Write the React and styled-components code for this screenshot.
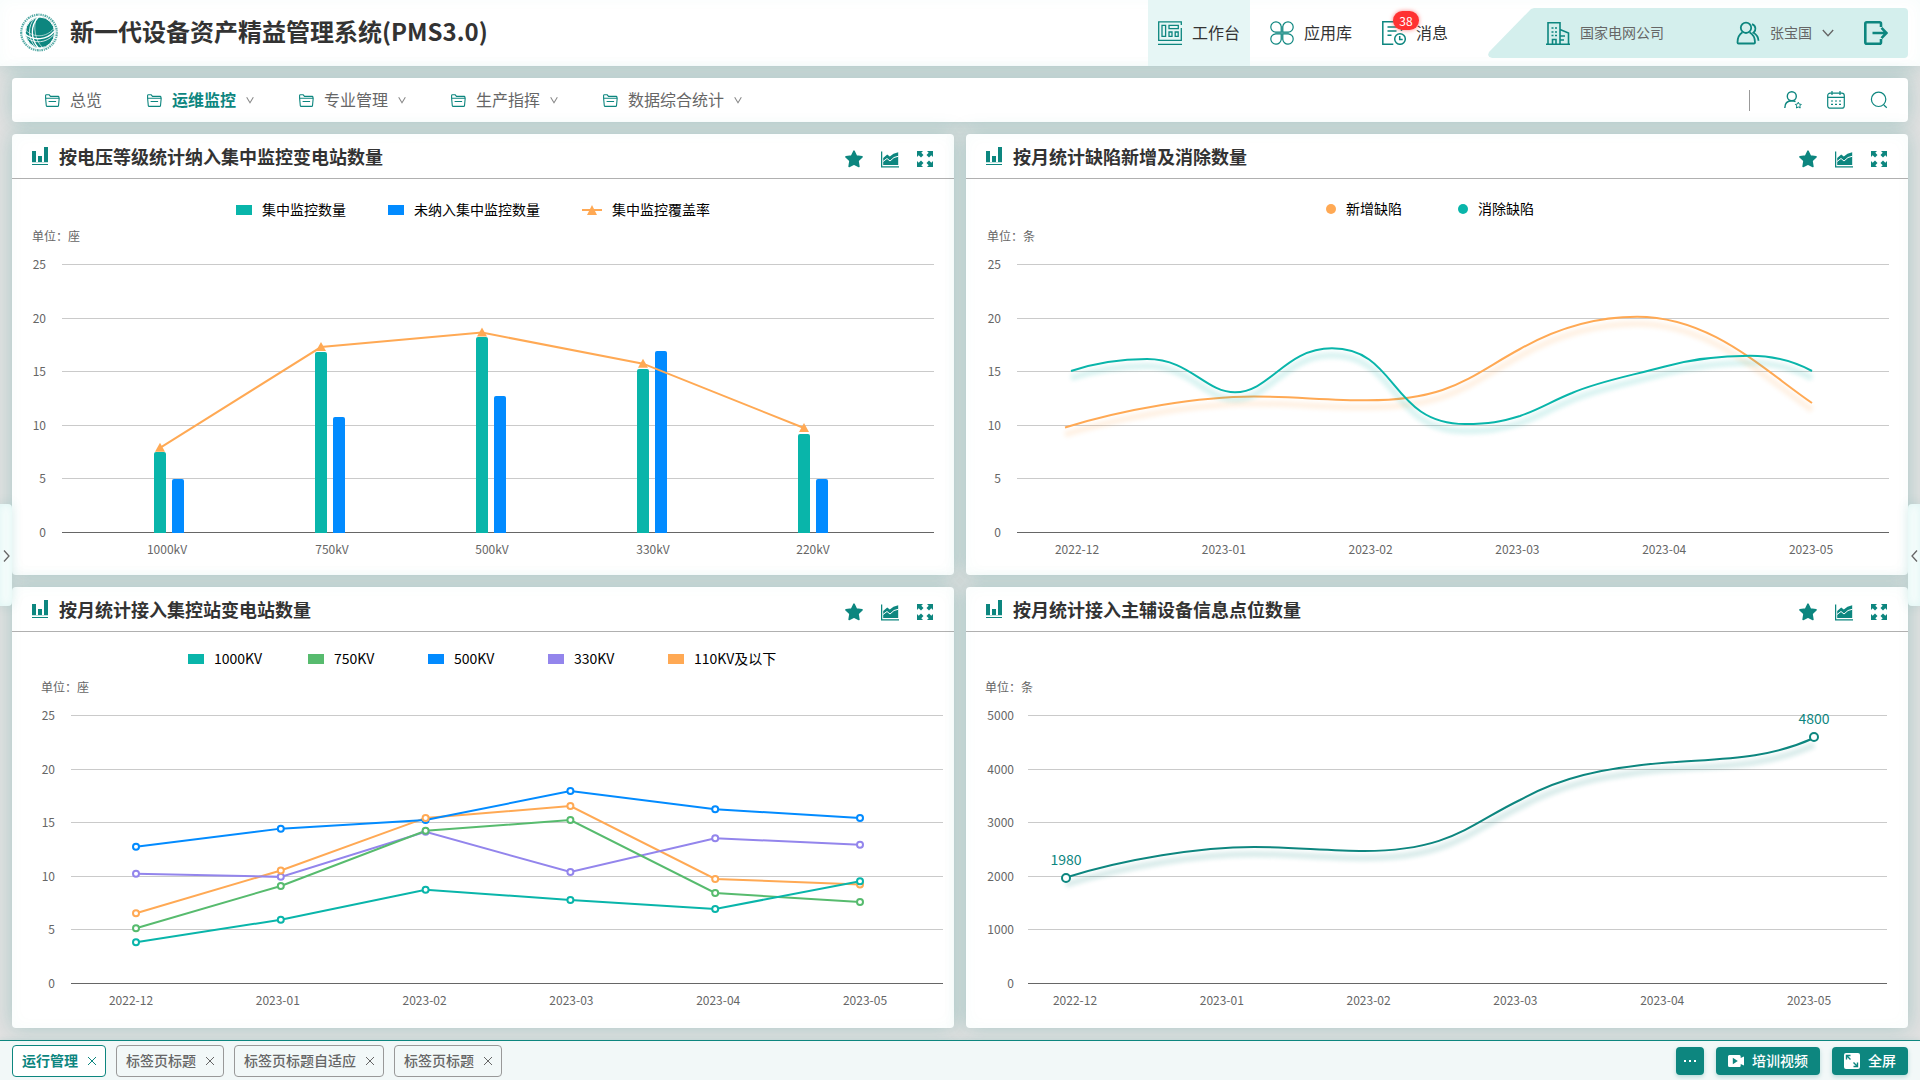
import React from "react";
import styled, { createGlobalStyle, css } from "styled-components";

const C = {
  brand: "#0d867f",
  teal: "#09b5aa",
  blue: "#028bff",
  orange: "#ffa954",
  green: "#57bb6e",
  purple: "#9385ec",
  text: "#333333",
  sub: "#666666",
  line: "#cacaca",
};

const FONT = '"Noto Sans CJK SC", "Noto Sans", sans-serif';
const glow = "0 0 20px rgba(13, 134, 127, 0.27)";
const innerGlow = "inset 0 0 16px rgba(9, 181, 170, 0.03)";

const Global = createGlobalStyle`
  *, *::before, *::after { box-sizing: border-box; }
  body { margin: 0; font-family: ${FONT}; color: ${C.text}; background: #e1e1e1; }
  button { font: inherit; color: inherit; background: none; border: 0; padding: 0; margin: 0; cursor: pointer; }
  a { color: inherit; text-decoration: none; }
  h1, h2, ul { margin: 0; padding: 0; }
  ul { list-style: none; }
  svg { display: block; flex: none; }
`;

const Page = styled.div`
  position: relative;
  display: flex;
  flex-direction: column;
  min-height: 100vh;
  overflow: hidden;
`;

/* Lifts the glyphs to the optical middle of the icon beside them. */
const Label = styled.span`
  padding-bottom: 2px;
`;

/* ---------- header ---------- */
const Header = styled.header`
  display: flex;
  align-items: stretch;
  height: 66px;
  padding: 0 12px 0 19px;
  background: #fff;
  box-shadow: ${innerGlow}, ${glow};
`;
const Brand = styled.div`
  display: flex;
  align-items: center;
  gap: 11px;
  flex: 1;
`;
const SiteTitle = styled.h1`
  font-size: 24px;
  font-weight: 700;
  line-height: 36px;
  padding-bottom: 4px;
`;
const TopMenu = styled.nav`
  display: flex;
  gap: 10px;
  margin-right: 30px;
`;
const TopLink = styled.a`
  position: relative;
  display: flex;
  align-items: center;
  gap: 10px;
  padding: 0 10px;
  font-size: 16px;
  background: ${(p) => (p.$active ? "#e6f6f5" : "transparent")};
`;
const Badge = styled.span`
  position: absolute;
  top: 11px;
  left: 21px;
  width: 26px;
  height: 19px;
  border-radius: 10px;
  background: #ff3232;
  color: #fff;
  font-size: 12px;
  line-height: 19px;
  text-align: center;
  box-shadow: 0 0 4px rgba(255, 50, 50, 0.6);
`;
const Account = styled.div`
  display: flex;
  align-items: center;
  justify-content: space-between;
  width: 420px;
  height: 50px;
  margin-top: 8px;
  padding: 0 20px 0 58px;
  border-radius: 4px;
  background: #d4efed;
  color: ${C.sub};
  font-size: 14px;
  clip-path: polygon(43px 1px, 46px 0, 100% 0, 100% 100%, 4px 100%, 1px 49px, 0 47px, 1px 44px);
`;
const Inline = styled.div`
  display: flex;
  align-items: center;
  gap: ${(p) => p.$gap || 10}px;
`;
const TextButton = styled.button`
  display: flex;
  align-items: center;
  gap: 10px;
`;

/* ---------- sub navigation ---------- */
const SubNav = styled.nav`
  display: flex;
  align-items: center;
  justify-content: space-between;
  height: 44px;
  margin: 12px 12px 0;
  padding: 0 20px 0 33px;
  border-radius: 4px;
  background: #fff;
  box-shadow: ${glow};
`;
const SubLink = styled.a`
  display: flex;
  align-items: center;
  gap: 10px;
  font-size: 16px;
  line-height: 24px;
  color: ${(p) => (p.$active ? C.brand : C.sub)};
  font-weight: ${(p) => (p.$active ? 700 : 400)};
`;
const Divider = styled.span`
  width: 1px;
  height: 21px;
  margin-right: 9px;
  background: #999;
`;
const IconButton = styled.button`
  display: flex;
  align-items: center;
  justify-content: center;
`;

/* ---------- cards ---------- */
const Grid = styled.main`
  flex: 1;
  display: grid;
  grid-template-columns: 1fr 1fr;
  grid-auto-rows: 1fr;
  gap: 12px;
  padding: 12px;
`;
const Card = styled.section`
  min-width: 0;
  border-radius: 4px;
  background: #fff;
  box-shadow: ${innerGlow}, ${glow};
`;
const CardHead = styled.div`
  display: flex;
  align-items: center;
  gap: 11px;
  height: 45px;
  padding: 0 21px 0 20px;
  border-bottom: 1px solid #b0b0b0;
`;
const CardTitle = styled.h2`
  flex: 1;
  font-size: 18px;
  font-weight: 700;
  line-height: 26px;
`;
const Tools = styled.div`
  display: flex;
  align-items: center;
  gap: 18px;
  padding-top: 5px;
`;
const Legend = styled.ul`
  display: flex;
  justify-content: center;
  gap: ${(p) => p.$gap}px;
  height: 44px;
  padding: ${(p) => p.$pad};
  color: #000;
  font-size: 14px;
  line-height: 22px;
`;
const LegendItem = styled.li`
  display: flex;
  align-items: center;
  gap: 10px;
  height: 24px;
  min-width: ${(p) => p.$min || 0}px;
`;
const Swatch = styled.span`
  width: ${(p) => (p.$round ? 10 : 16)}px;
  height: 10px;
  border-radius: ${(p) => (p.$round ? 5 : 0)}px;
  background: ${(p) => p.$color};
`;
const ChartSvg = styled.svg`
  width: 100%;
  height: auto;
  overflow: visible;
  text { font-family: ${FONT}; font-size: 12px; fill: ${C.sub}; }
  .value { font-size: 14px; fill: ${C.brand}; }
`;

/* ---------- footer ---------- */
const Footer = styled.footer`
  display: flex;
  align-items: center;
  justify-content: space-between;
  height: 40px;
  padding: 0 12px;
  border-top: 1px solid ${C.brand};
  background: #f2f8f8;
  box-shadow: 0 0 6px rgba(13, 134, 127, 0.15);
  font-size: 14px;
  font-weight: 500;
`;
const Tab = styled.div`
  display: flex;
  align-items: center;
  gap: 10px;
  height: 32px;
  padding: 0 9px;
  border: 1px solid ${(p) => (p.$active ? C.brand : "#999")};
  border-radius: 4px;
  color: ${(p) => (p.$active ? C.brand : C.sub)};
  ${(p) => p.$active && css`background: #fff; font-weight: 700;`}
`;
const TabName = styled.button`
  && { padding-bottom: 2px; }
`;
const Action = styled.button`
  display: flex;
  align-items: center;
  justify-content: center;
  gap: 8px;
  height: 28px;
  && { padding: 0 ${(p) => (p.$small ? 8 : 12)}px; }
  border-radius: 4px;
  background: ${C.brand};
  color: #fff;
  box-shadow: 0 2px 4px rgba(13, 134, 127, 0.25);
`;
const Handle = styled.button`
  position: absolute;
  top: 504px;
  ${(p) => p.$side}: 0;
  display: flex;
  align-items: center;
  justify-content: center;
  width: 12px;
  height: 102px;
  padding-top: 2px;
  border-radius: ${(p) => (p.$side === "left" ? "0 4px 4px 0" : "4px 0 0 4px")};
  background: #f6fdfc;
  box-shadow: inset 0 0 8px rgba(9, 181, 170, 0.1), 0 0 12px rgba(13, 134, 127, 0.15);
`;

/* ---------- icons ---------- */
const Stroke = ({ size, w = 1.5, color = C.brand, vb = 24, children }) => (
  <svg width={size} height={size} viewBox={`0 0 ${vb} ${vb}`} fill="none" stroke={color} strokeWidth={w} aria-hidden="true">
    {children}
  </svg>
);

const Logo = () => (
  <svg width="40" height="40" viewBox="0 0 40 40" aria-hidden="true">
    <circle cx="20" cy="19.5" r="17.8" fill="none" stroke={C.brand} strokeWidth="2.2" strokeDasharray="1.2 .8 1.8 .7 1 .9 1.5 .8" opacity=".7" />
    <ellipse cx="21" cy="19.5" rx="14.6" ry="15.4" fill={C.brand} stroke="#fff" strokeWidth="1" />
    <g fill="none" stroke="#fff">
      <path d="M19 4.500C12 12 11 25 19 34.500" strokeWidth="1.300" />
      <path d="M15.500 5.500C8.500 13 9 25 16 33.500" strokeWidth=".8" />
      <path d="M17.500 4.500C14 14 16 27 23 34" strokeWidth=".6" />
      <path d="M6.500 21.500C15 28 28 27 35 18.500" strokeWidth="1.500" />
      <path d="M7.500 24.500C16 31 27 30 34.500 22" strokeWidth=".8" />
      <path d="M7 17.500C15 25 27 24.500 34.500 16" strokeWidth=".6" />
    </g>
  </svg>
);
const DeskIcon = () => (
  <Stroke size={24} w={1.3}>
    <path d="M23.300 4V.8H.7v18.500h22.600V7M0 23.300h24" />
    <path d="M4 4.300h3.600v11H4zM11 4.300h9.300v3.400H11zM11 11h3v4.300h-3zM17.200 11h3v4.300h-3z" />
  </Stroke>
);
const AppsIcon = () => (
  <Stroke size={24} w={1.2}>
    <path d="M11.200 11.200H5.800A5.200 5.200 0 1 1 11.200 5.800zM12.800 11.200V5.800a5.200 5.200 0 1 1 5.400 5.400zM11.200 12.800v5.400a5.200 5.200 0 1 1-5.400-5.400zM12.800 12.800h5.400a5.200 5.200 0 1 1-5.400 5.400z" />
    <path d="M5 12h14M12 5v14" opacity=".5" />
  </Stroke>
);
const NoticeIcon = () => (
  <Stroke size={24} w={1.5}>
    <path d="M19.500 10V.8H.8v22.400h10.500M5.500 6h9M5.500 10h9M5.500 14.300h4" />
    <circle cx="18" cy="18" r="5.300" />
    <path d="M17.700 15v3.500h3" />
  </Stroke>
);
const BuildingIcon = () => (
  <Stroke size={24} w={1.6}>
    <path d="M0 23.200h24M2 23V1.800h12V23M14 8.500l8.500 3.500v11M14 15h5M14 19h4" />
    <path d="M6.500 23v-4.500h3.500V23" />
    <path d="M5.500 7h2M9 7h2M5.500 11h2M9 11h2M5.500 14.500h2M9 14.500h2" />
  </Stroke>
);
const UsersIcon = () => (
  <Stroke size={24} w={1.8}>
    <circle cx="10" cy="6.800" r="5.200" />
    <path d="M6.500 11.300C3 13.500 1.500 17 1.500 21.500q0 1 1 1h15.500q1 0 1-1c0-4.500-1.500-8-5.500-10.200" />
    <path d="M16 3.200c4 1.500 4.500 6 1.500 8.500 3.500 2 4.800 4.500 5 8" />
  </Stroke>
);
const LogoutIcon = () => (
  <Stroke size={24} w={2.6}>
    <path d="M17 6V2.800Q17 1.300 15.500 1.300H2.800Q1.300 1.300 1.300 2.800v18.400q0 1.500 1.500 1.500h12.700q1.500 0 1.500-1.500V18" />
    <path d="M8.500 12H22M17.500 6.800l5 5.200-5 5.200" />
  </Stroke>
);
const Chevron = ({ w = 8, color = "#888" }) => (
  <svg width={w} height={w} viewBox="0 0 12 12" fill="none" stroke={color} strokeWidth={w === 8 ? 1.6 : 1.2} aria-hidden="true">
    <path d="M1 2l5 8 5-8" />
  </svg>
);
const WideChevron = () => (
  <svg width="12" height="12" viewBox="0 0 12 12" fill="none" stroke="#666" strokeWidth="1.300" aria-hidden="true">
    <path d="M.8 3L6 8.800 11.200 3" />
  </svg>
);
const FolderIcon = () => (
  <Stroke size={15} vb={15} w={1.1}>
    <path d="M.6 5V2.600q0-.8.800-.8h2.800l1.300 1.600h7.700q.7 0 .7.800V5" />
    <path d="M.6 5.200h13.600l-.7 7.400q-.1.800-.9.800H2.200q-.8 0-.9-.8zM3.600 8.500h7.500" />
  </Stroke>
);
const UserStarIcon = () => (
  <Stroke size={18} vb={18} w={1.4}>
    <circle cx="7.800" cy="5.300" r="4.500" />
    <path d="M.8 17C.8 12.500 3.500 9.800 7.800 9.800c1.500 0 2.700.3 3.700.9" />
    <path d="M14.300 11.200l.9 1.900 2.100.3-1.500 1.500.4 2.100-1.900-1-1.900 1 .4-2.100-1.500-1.500 2.100-.3z" strokeWidth="1" />
  </Stroke>
);
const CalendarIcon = () => (
  <Stroke size={18} vb={18} w={1.2}>
    <rect x=".7" y="2.200" width="16.600" height="15" rx="2.500" />
    <path d="M.7 6.300h16.600M5 0v4M13 0v4" />
    <path d="M4 10h2M8 10h2M12 10h2M4 13.300h2M8 13.300h2M12 13.300h2" />
  </Stroke>
);
const SearchIcon = () => (
  <Stroke size={18} vb={18} w={1.2}>
    <circle cx="8.600" cy="8.300" r="7.200" />
    <path d="M13.800 14l3 2.800" />
  </Stroke>
);
const BarsIcon = () => (
  <svg width="16" height="18" viewBox="0 0 16 18" fill={C.brand} aria-hidden="true">
    <path d="M0 4h4v11H0zM6 9h4v6H6zM12 0h4v15h-4zM0 17h16v1H0z" />
    <path d="M0 15h16v1H0z" opacity=".25" />
  </svg>
);
const StarIcon = () => (
  <svg width="18" height="18" viewBox="0 0 18 18" fill={C.brand} stroke={C.brand} strokeWidth="1.600" strokeLinejoin="round" aria-hidden="true">
    <path d="M9 1.200l2.400 4.900 5.600.8-4 3.900.9 5.700L9 14l-4.900 2.500.9-5.700-4-3.900 5.600-.8z" />
  </svg>
);
const AreaIcon = () => (
  <svg width="18" height="18" viewBox="0 0 18 18" aria-hidden="true">
    <path d="M.6 1.500v15.300H18" fill="none" stroke={C.brand} strokeWidth="1.300" />
    <path d="M2.200 15V8l4-3.600 2.600 2L12.500 3.800l4.700-1.500V15z" fill={C.brand} />
    <path d="M2 11.500l4-3 3 2.500 4-3.500 4.500-1.300" fill="none" stroke="#fff" strokeWidth="1" />
  </svg>
);
const ExpandIcon = () => (
  <svg width="16" height="16" viewBox="0 0 16 16" fill={C.brand} aria-hidden="true">
    <path d="M0 0h6L4.300 1.700 6.500 4 4 6.500 1.700 4.300 0 6zM16 0v6l-1.700-1.700L12 6.500 9.500 4l2.200-2.300L10 0zM0 16v-6l1.700 1.700L4 9.500 6.500 12l-2.200 2.300L6 16zM16 16h-6l1.700-1.700L9.500 12 12 9.500l2.300 2.200L16 10z" />
  </svg>
);
const CloseIcon = () => (
  <svg width="8" height="8" viewBox="0 0 8 8" stroke="currentColor" strokeWidth="1" aria-hidden="true">
    <path d="M0 0l8 8M8 0L0 8" />
  </svg>
);
const VideoIcon = () => (
  <svg width="16" height="16" viewBox="0 0 16 16" aria-hidden="true">
    <path d="M1.500 2h10q1.200 0 1.200 1.500V5L16 3.500v9L12.700 11v1.500q0 1.500-1.200 1.500h-10Q0 14 0 12.500v-9Q0 2 1.500 2z" fill="#fff" />
    <path d="M4.800 4.800v6.400L9.800 8z" fill={C.brand} />
  </svg>
);
const FullIcon = () => (
  <svg width="16" height="16" viewBox="0 0 16 16" aria-hidden="true">
    <rect width="16" height="16" rx="2" fill="#fff" />
    <path d="M2.500 6.500V2.500h4M2.500 2.500l4 4M13.500 9.500v4h-4M13.500 13.500l-4-4" fill="none" stroke={C.brand} strokeWidth="1.400" />
  </svg>
);

/* ---------- charts ---------- */
const MONTHS = ["2022-12", "2023-01", "2023-02", "2023-03", "2023-04", "2023-05"];
const PLOT = 268;
const scaleY = (top, max) => (v) => top + PLOT - (v / max) * PLOT;
const spread = (start) => MONTHS.map((_, i) => start + i * 146.8);

function Chart({ title, unit, unitX, x0, x1, top, labelX, ticks, labels, labelXs, children }) {
  const max = ticks[0];
  const y = scaleY(top, max);
  return (
    <ChartSvg viewBox="0 0 942 352" role="img" aria-label={title}>
      <text x={unitX} y={top - 23}>{unit}</text>
      {ticks.map((t) => (
        <g key={t}>
          <rect x={x0} y={Math.round(y(t))} width={x1 - x0} height="1" fill={t === 0 ? C.sub : C.line} />
          <text x={labelX} y={Math.round(y(t)) + 5} textAnchor="end">{t}</text>
        </g>
      ))}
      {labels.map((l, i) => (
        <text key={l} x={labelXs[i]} y={top + PLOT + 22} textAnchor="middle">{l}</text>
      ))}
      {children}
    </ChartSvg>
  );
}

const FIVES = [25, 20, 15, 10, 5, 0];
const VOLTAGE = [
  { name: "1000kV", on: 7.46, off: 4.95, rate: 7.85 },
  { name: "750kV", on: 16.8, off: 10.75, rate: 17.25 },
  { name: "500kV", on: 18.2, off: 12.7, rate: 18.6 },
  { name: "330kV", on: 15.2, off: 16.9, rate: 15.7 },
  { name: "220kV", on: 9.15, off: 4.95, rate: 9.7 },
];

function VoltageChart() {
  const y = scaleY(41, 25);
  const bar = (x, v, fill) => {
    const t = Math.round(y(v));
    return <path d={`M${x} 310V${t + 2}q0-2 2-2h8q2 0 2 2V310z`} fill={fill} />;
  };
  return (
    <Chart title="按电压等级统计" unit="单位：座" unitX={20} x0={50} x1={922} top={41} labelX={34}
      ticks={FIVES} labels={VOLTAGE.map((d) => d.name)} labelXs={[155, 320, 480, 641, 801]}>
      {VOLTAGE.map((d, i) => (
        <g key={d.name}>
          {bar(142 + i * 161, d.on, C.teal)}
          {bar(160 + i * 161, d.off, C.blue)}
        </g>
      ))}
      <polyline points={VOLTAGE.map((d, i) => `${148 + i * 161},${y(d.rate)}`).join(" ")} fill="none" stroke={C.orange} strokeWidth="2" />
      {VOLTAGE.map((d, i) => (
        <path key={d.name} d={`M${148 + i * 161} ${y(d.rate) - 5}l5 9h-10z`} fill={C.orange} />
      ))}
    </Chart>
  );
}

function SmoothLine({ d, color, id }) {
  return (
    <>
      <filter id={id} x="-5%" y="-30%" width="110%" height="170%">
        <feGaussianBlur stdDeviation="2" />
      </filter>
      <path d={d} fill="none" stroke={color} strokeWidth="6" opacity=".16" transform="translate(0 7)" filter={`url(#${id})`} />
      <path d={d} fill="none" stroke={color} strokeWidth="2" />
    </>
  );
}

function DefectChart() {
  return (
    <Chart title="按月统计缺陷新增及消除数量" unit="单位：条" unitX={21} x0={51} x1={923} top={41} labelX={35}
      ticks={FIVES} labels={MONTHS} labelXs={spread(111)}>
      <SmoothLine id="added" color={C.orange}
        d="M99 204.500C159 186 234 173.500 288 173.500C324 173.500 364 177.300 401 177.300C484 177.300 504 153 554 126C584 109 624 93.700 671 93.700C744 93.700 794 144 846 180" />
      <SmoothLine id="cleared" color={C.teal}
        d="M105 148C129 140 156 136 181 136C224 136 239 169.300 269 169.300C304 169.300 319 125.300 366 125.300C432 125.300 424 201 499 201C524 201 534 199 554 193C574 186 586 178 606 170C634 158 664 153 698 143.700C724 136.500 754 132.700 784 132.700C811 132.700 831 140 846 148" />
    </Chart>
  );
}

const SERIES = {
  orange: [6.5, 10.5, 15.4, 16.5, 9.7, 9.2],
  purple: [10.2, 9.9, 14.1, 10.35, 13.5, 12.9],
  green: [5.1, 9.05, 14.2, 15.2, 8.4, 7.55],
  blue: [12.7, 14.4, 15.2, 17.9, 16.2, 15.4],
  teal: [3.8, 5.9, 8.7, 7.75, 6.9, 9.5],
};

function StationChart() {
  const y = scaleY(39, 25);
  const x = (i) => 124 + i * 144.8;
  return (
    <Chart title="按月统计接入集控站变电站数量" unit="单位：座" unitX={29} x0={59} x1={931} top={39} labelX={43}
      ticks={FIVES} labels={MONTHS} labelXs={spread(119)}>
      {Object.entries(SERIES).map(([k, vs]) => (
        <polyline key={k} points={vs.map((v, i) => `${x(i)},${y(v)}`).join(" ")} fill="none" stroke={C[k]} strokeWidth="2" />
      ))}
      {["purple", "blue", "orange", "green", "teal"].map((k) =>
        SERIES[k].map((v, i) => (
          <circle key={k + i} cx={x(i)} cy={y(v)} r="3" fill="#fff" stroke={C[k]} strokeWidth="2" />
        ))
      )}
    </Chart>
  );
}

function PointChart() {
  return (
    <Chart title="按月统计接入主辅设备信息点位数量" unit="单位：条" unitX={19} x0={62} x1={921} top={39} labelX={48}
      ticks={[5000, 4000, 3000, 2000, 1000, 0]} labels={MONTHS} labelXs={spread(109)}>
      <SmoothLine id="points" color={C.brand}
        d="M100 201.500C159 183 234 171 288 171C324 171 364 175 398 175C484 175 504 148 554 124C594 102 634 92 702 86.500C754 82.500 799 84 848 62" />
      <circle cx="100" cy="202" r="4" fill="#fff" stroke={C.brand} strokeWidth="2" />
      <circle cx="848" cy="61" r="4" fill="#fff" stroke={C.brand} strokeWidth="2" />
      <text className="value" x="100" y="189" textAnchor="middle">1980</text>
      <text className="value" x="848" y="48" textAnchor="middle">4800</text>
    </Chart>
  );
}

function Panel({ title, legend, children }) {
  return (
    <Card>
      <CardHead>
        <BarsIcon />
        <CardTitle>{title}</CardTitle>
        <Tools>
          <IconButton aria-label="收藏"><StarIcon /></IconButton>
          <IconButton aria-label="图表"><AreaIcon /></IconButton>
          <IconButton aria-label="放大"><ExpandIcon /></IconButton>
        </Tools>
      </CardHead>
      {legend || <Legend as="div" />}
      {children}
    </Card>
  );
}

const NAV = ["总览", "运维监控", "专业管理", "生产指挥", "数据综合统计"];
const TABS = ["运行管理", "标签页标题", "标签页标题自适应", "标签页标题"];
const KV = [["1000KV", C.teal], ["750KV", C.green], ["500KV", C.blue], ["330KV", C.purple], ["110KV及以下", C.orange]];

export default function App() {
  return (
    <Page>
      <Global />
      <Header>
        <Brand>
          <Logo />
          <SiteTitle>新一代设备资产精益管理系统(PMS3.0)</SiteTitle>
        </Brand>
        <TopMenu>
          <TopLink href="#desk" $active><DeskIcon /><Label>工作台</Label></TopLink>
          <TopLink href="#apps"><AppsIcon /><Label>应用库</Label></TopLink>
          <TopLink href="#news"><NoticeIcon /><Label>消息</Label><Badge>38</Badge></TopLink>
        </TopMenu>
        <Account>
          <Inline><BuildingIcon /><Label>国家电网公司</Label></Inline>
          <Inline $gap={30}>
            <TextButton><UsersIcon /><Label>张宝国</Label><WideChevron /></TextButton>
            <IconButton aria-label="退出"><LogoutIcon /></IconButton>
          </Inline>
        </Account>
      </Header>

      <SubNav>
        <Inline $gap={45}>
          {NAV.map((n, i) => (
            <SubLink key={n} href={`#nav${i}`} $active={i === 1}>
              <FolderIcon /><Label>{n}</Label>{i > 0 && <Chevron />}
            </SubLink>
          ))}
        </Inline>
        <Inline $gap={25}>
          <Divider />
          <IconButton aria-label="用户"><UserStarIcon /></IconButton>
          <IconButton aria-label="日历"><CalendarIcon /></IconButton>
          <IconButton aria-label="搜索"><SearchIcon /></IconButton>
        </Inline>
      </SubNav>

      <Grid>
        <Panel title="按电压等级统计纳入集中监控变电站数量" legend={
          <Legend $gap={42} $pad="19px 20px 0 0">
            <LegendItem><Swatch $color={C.teal} /><Label>集中监控数量</Label></LegendItem>
            <LegendItem><Swatch $color={C.blue} /><Label>未纳入集中监控数量</Label></LegendItem>
            <LegendItem>
              <svg width="20" height="10" viewBox="0 0 20 10" fill={C.orange} aria-hidden="true">
                <path d="M0 4h20v2H0zM10 0l5 10H5z" />
              </svg>
              <Label>集中监控覆盖率</Label>
            </LegendItem>
          </Legend>
        }>
          <VoltageChart />
        </Panel>
        <Panel title="按月统计缺陷新增及消除数量" legend={
          <Legend $gap={56} $pad="18px 14px 0 0">
            <LegendItem><Swatch $round $color={C.orange} /><Label>新增缺陷</Label></LegendItem>
            <LegendItem><Swatch $round $color={C.teal} /><Label>消除缺陷</Label></LegendItem>
          </Legend>
        }>
          <DefectChart />
        </Panel>
        <Panel title="按月统计接入集控站变电站数量" legend={
          <Legend $gap={0} $pad="15px 0 0 10px">
            {KV.map(([n, c]) => <LegendItem key={n} $min={120}><Swatch $color={c} /><Label>{n}</Label></LegendItem>)}
          </Legend>
        }>
          <StationChart />
        </Panel>
        <Panel title="按月统计接入主辅设备信息点位数量">
          <PointChart />
        </Panel>
      </Grid>

      <Footer>
        <Inline>
          {TABS.map((t, i) => (
            <Tab key={i} $active={i === 0}>
              <TabName>{t}</TabName>
              <IconButton aria-label="关闭"><CloseIcon /></IconButton>
            </Tab>
          ))}
        </Inline>
        <Inline $gap={12}>
          <Action $small aria-label="更多">
            <svg width="12" height="2" viewBox="0 0 12 2" fill="#fff" aria-hidden="true"><path d="M0 0h2v2H0zM5 0h2v2H5zM10 0h2v2h-2z" /></svg>
          </Action>
          <Action><VideoIcon /><Label>培训视频</Label></Action>
          <Action><FullIcon /><Label>全屏</Label></Action>
        </Inline>
      </Footer>

      <Handle $side="left" aria-label="展开左侧">
        <svg width="7" height="12" viewBox="0 0 7 12" fill="none" stroke="#666" strokeWidth="1.300" aria-hidden="true"><path d="M1 .5L6 6 1 11.500" /></svg>
      </Handle>
      <Handle $side="right" aria-label="展开右侧">
        <svg width="7" height="12" viewBox="0 0 7 12" fill="none" stroke="#666" strokeWidth="1.300" aria-hidden="true"><path d="M6 .5L1 6l5 5.500" /></svg>
      </Handle>
    </Page>
  );
}
